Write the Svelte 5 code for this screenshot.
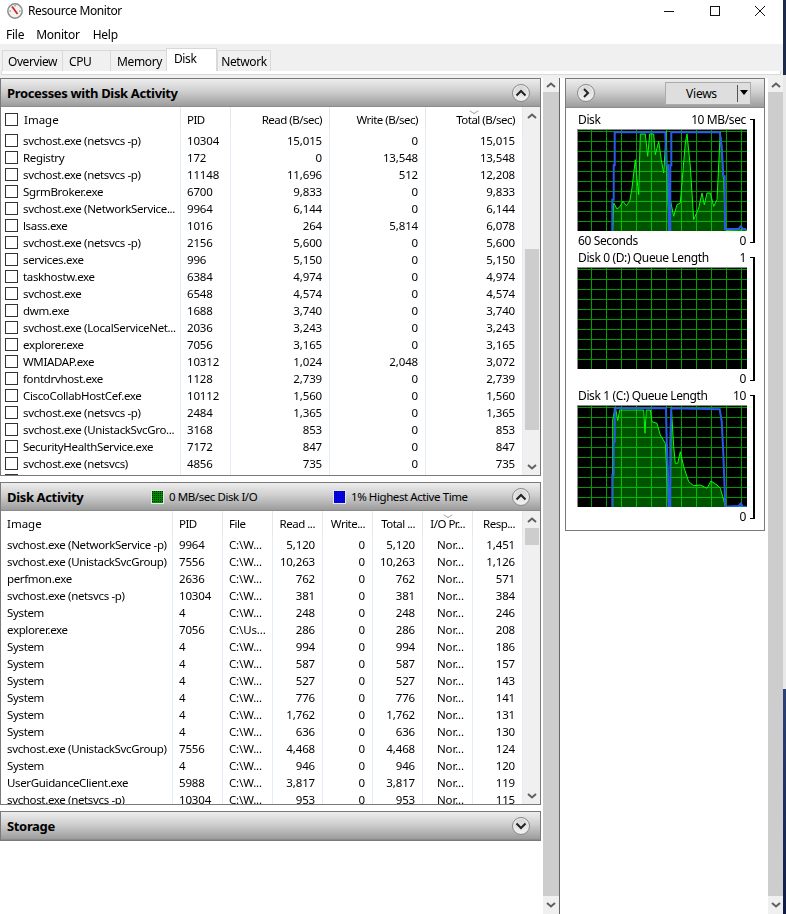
<script>
  const fmt = (n) => n.toLocaleString('en-US');
  const procs = [
    ['svchost.exe (netsvcs -p)', 10304, 15015, 0, 15015],
    ['Registry', 172, 0, 13548, 13548],
    ['svchost.exe (netsvcs -p)', 11148, 11696, 512, 12208],
    ['SgrmBroker.exe', 6700, 9833, 0, 9833],
    ['svchost.exe (NetworkService...', 9964, 6144, 0, 6144],
    ['lsass.exe', 1016, 264, 5814, 6078],
    ['svchost.exe (netsvcs -p)', 2156, 5600, 0, 5600],
    ['services.exe', 996, 5150, 0, 5150],
    ['taskhostw.exe', 6384, 4974, 0, 4974],
    ['svchost.exe', 6548, 4574, 0, 4574],
    ['dwm.exe', 1688, 3740, 0, 3740],
    ['svchost.exe (LocalServiceNet...', 2036, 3243, 0, 3243],
    ['explorer.exe', 7056, 3165, 0, 3165],
    ['WMIADAP.exe', 10312, 1024, 2048, 3072],
    ['fontdrvhost.exe', 1128, 2739, 0, 2739],
    ['CiscoCollabHostCef.exe', 10112, 1560, 0, 1560],
    ['svchost.exe (netsvcs -p)', 2484, 1365, 0, 1365],
    ['svchost.exe (UnistackSvcGro...', 3168, 853, 0, 853],
    ['SecurityHealthService.exe', 7172, 847, 0, 847],
    ['svchost.exe (netsvcs)', 4856, 735, 0, 735]
  ];
  const disk = [
    ['svchost.exe (NetworkService -p)', 9964, 'C:\\W...', 5120, 0, 5120, 1451],
    ['svchost.exe (UnistackSvcGroup)', 7556, 'C:\\W...', 10263, 0, 10263, 1126],
    ['perfmon.exe', 2636, 'C:\\W...', 762, 0, 762, 571],
    ['svchost.exe (netsvcs -p)', 10304, 'C:\\W...', 381, 0, 381, 384],
    ['System', 4, 'C:\\W...', 248, 0, 248, 246],
    ['explorer.exe', 7056, 'C:\\Us...', 286, 0, 286, 208],
    ['System', 4, 'C:\\W...', 994, 0, 994, 186],
    ['System', 4, 'C:\\W...', 587, 0, 587, 157],
    ['System', 4, 'C:\\W...', 527, 0, 527, 143],
    ['System', 4, 'C:\\W...', 776, 0, 776, 141],
    ['System', 4, 'C:\\W...', 1762, 0, 1762, 131],
    ['System', 4, 'C:\\W...', 636, 0, 636, 130],
    ['svchost.exe (UnistackSvcGroup)', 7556, 'C:\\W...', 4468, 0, 4468, 124],
    ['System', 4, 'C:\\W...', 946, 0, 946, 120],
    ['UserGuidanceClient.exe', 5988, 'C:\\W...', 3817, 0, 3817, 119],
    ['svchost.exe (netsvcs -p)', 10304, 'C:\\W...', 953, 0, 953, 115]
  ];
  const conv = (s, oy) => s.trim().split(/\s+/).map((p) => {
    const [x, y] = p.split(',').map(Number);
    return `${((x - 50) / 3).toFixed(1)},${((y - oy) / 3).toFixed(1)}`;
  }).join(' ');
  const graphs = [
    {
      label: 'Disk', max: '10 MB/sec', foot: '60 Seconds',
      area: conv('157,694 160,610 170,628 178,622 188,605 198,618 208,605 215,565 225,480 232,560 235,585 240,403 245,403 255,403 262,470 268,403 280,403 285,465 295,425 303,480 310,520 318,395 322,600 328,694 330,600 340,650 350,615 360,610 375,430 380,403 390,500 400,660 415,625 425,580 432,615 440,580 450,580 460,620 470,600 480,396 490,540 495,690 500,692 558,690 558,694', 388),
      blue: conv('156,694 156,600 160,600 160,497 163,497 163,398 315,398 318,497 323,497 326,694 330,694 330,497 333,497 333,398 478,398 484,440 489,530 493,530 494,688 535,688 541,680 548,688 558,688', 388)
    },
    { label: 'Disk 0 (D:) Queue Length', max: '1', foot: '', area: '', blue: '' },
    {
      label: 'Disk 1 (C:) Queue Length', max: '10', foot: '',
      area: conv('157,772 157,510 165,470 172,512 178,480 250,480 254,550 258,480 270,480 275,515 290,520 300,555 315,580 320,680 325,772 330,772 333,470 340,590 345,640 352,640 360,605 370,650 385,695 400,707 420,705 440,715 452,693 470,705 480,715 490,750 495,770 558,770 558,772', 465),
      blue: conv('156,772 156,675 160,675 160,575 163,575 163,475 317,475 319,575 323,675 325,772 330,772 330,575 333,475 478,478 484,515 489,610 492,690 495,770 535,768 542,760 547,770 558,770', 465)
    }
  ];
</script>

{#snippet chev(dir)}
  <svg class="chev" width="12" height="10" viewBox="0 0 12 10">
    <path d={dir === 'up' ? 'M2 7 L6 3.5 L10 7' : 'M2 3 L6 6.5 L10 3'} />
  </svg>
{/snippet}

{#snippet round(dir)}
  <span class="round">
    <svg width="12" height="10" viewBox="0 0 12 10">
      <path d={dir === 'up' ? 'M1.5 7.5 L6 3 L10.5 7.5' : dir === 'down' ? 'M1.5 2.5 L6 7 L10.5 2.5' : 'M4 1 L8 5 L4 9'} />
    </svg>
  </span>
{/snippet}

{#snippet vbar()}
  <div class="sb">
    <div class="sb-btn top">{@render chev('up')}</div>
    <div class="sb-track"></div>
    <div class="sb-btn bottom">{@render chev('down')}</div>
  </div>
{/snippet}

<div class="win">
  <div class="main">
    <header class="title">
      <svg class="logo" width="16" height="16" viewBox="0 0 16 16">
        <circle cx="8" cy="8" r="7.2" fill="#f4f2f0" stroke="#8a8a8a" stroke-width="1.4" />
        <path d="M5 3.5 L10.5 11" stroke="#c8262a" stroke-width="1.8" />
        <path d="M8 2 L8 3.5 M2.5 8 L4 8 M12 8 L13.5 8" stroke="#555" stroke-width="0.8" />
      </svg>
      <span class="title-text">Resource Monitor</span>
      <div class="controls">
        <span class="ctl"><svg width="12" height="12" viewBox="0 0 12 12"><path d="M1 6.5 H11" /></svg></span>
        <span class="ctl"><svg width="12" height="12" viewBox="0 0 12 12"><rect x="1.5" y="1.5" width="9" height="9" /></svg></span>
        <span class="ctl"><svg width="12" height="12" viewBox="0 0 12 12"><path d="M1 1 L11 11 M11 1 L1 11" /></svg></span>
      </div>
    </header>
    <nav class="menu"><span>File</span><span>Monitor</span><span>Help</span></nav>
    <div class="tabzone">
      <div class="tabs">
        <span class="tab t1">Overview</span>
        <span class="tab t2">CPU</span>
        <span class="tab t3">Memory</span>
        <span class="tab t4 active">Disk</span>
        <span class="tab t5">Network</span>
      </div>
      <div class="tabline"></div>
    </div>

    <div class="content">
      <div class="left">
        <section class="panel procs">
          <div class="phead"><h2>Processes with Disk Activity</h2>{@render round('up')}</div>
          <div class="pbody">
            <div class="table">
              <div class="row hrow pcols">
                <div class="c img"><i class="cb"></i><span class="hi">Image</span></div>
                <div class="c pid">PID</div>
                <div class="c num">Read (B/sec)</div>
                <div class="c num">Write (B/sec)</div>
                <div class="c num sorted">Total (B/sec)</div>
              </div>
              {#each procs as p}
                <div class="row pcols">
                  <div class="c img"><i class="cb"></i><span>{p[0]}</span></div>
                  <div class="c pid">{p[1]}</div>
                  <div class="c num">{fmt(p[2])}</div>
                  <div class="c num">{fmt(p[3])}</div>
                  <div class="c num">{fmt(p[4])}</div>
                </div>
              {/each}
              <div class="row pcols">
                <div class="c img"><i class="cb"></i></div>
                <div class="c"></div><div class="c"></div><div class="c"></div><div class="c"></div>
              </div>
            </div>
            <div class="inner-sb">
              <div class="isb-btn">{@render chev('up')}</div>
              <div class="isb-track"><div class="isb-thumb t-procs"></div></div>
              <div class="isb-btn">{@render chev('down')}</div>
            </div>
          </div>
        </section>

        <section class="panel dact">
          <div class="phead">
            <h2>Disk Activity</h2>
            <div class="legend l1"><i class="sw green"></i>0 MB/sec Disk I/O</div>
            <div class="legend l2"><i class="sw blue"></i>1% Highest Active Time</div>
            {@render round('up')}
          </div>
          <div class="pbody">
            <div class="table">
              <div class="row hrow dcols">
                <div class="c dimg">Image</div>
                <div class="c pid">PID</div>
                <div class="c pid">File</div>
                <div class="c num">Read ...</div>
                <div class="c num">Write...</div>
                <div class="c num">Total ...</div>
                <div class="c num sorted">I/O Pr...</div>
                <div class="c num">Resp...</div>
              </div>
              {#each disk as d}
                <div class="row dcols">
                  <div class="c dimg">{d[0]}</div>
                  <div class="c pid">{d[1]}</div>
                  <div class="c pid">{d[2]}</div>
                  <div class="c num">{fmt(d[3])}</div>
                  <div class="c num">{fmt(d[4])}</div>
                  <div class="c num">{fmt(d[5])}</div>
                  <div class="c nor">Nor...</div>
                  <div class="c num">{fmt(d[6])}</div>
                </div>
              {/each}
            </div>
            <div class="inner-sb">
              <div class="isb-btn">{@render chev('up')}</div>
              <div class="isb-track"><div class="isb-thumb t-disk"></div></div>
              <div class="isb-btn">{@render chev('down')}</div>
            </div>
          </div>
        </section>

        <section class="panel storage">
          <div class="phead"><h2>Storage</h2>{@render round('down')}</div>
        </section>
      </div>

      {@render vbar()}

      <div class="rightcol">
        <section class="panel graphs">
          <div class="phead ghead">
            {@render round('right')}
            <div class="views">
              <span class="views-l">Views</span>
              <span class="views-r"><svg width="10" height="6" viewBox="0 0 10 6"><path d="M1 0 H9 L5 5 Z" /></svg></span>
            </div>
          </div>
          <div class="gbody">
            {#each graphs as g}
              <div class="gblock">
                <div class="gcol">
                  <div class="gtop"><span>{g.label}</span><span>{g.max}</span></div>
                  <div class="chartbox">
                    <svg class="chart" width="170" height="102" viewBox="0 0 170 102">
                      {#if g.area}
                        <polygon points={g.area} class="area" />
                        <polyline points={g.area} class="aline" />
                        <polyline points={g.blue} class="bline" />
                      {/if}
                    </svg>
                  </div>
                  <div class="gfoot"><span>{g.foot}</span><span>0</span></div>
                </div>
                <div class="bracket"></div>
              </div>
            {/each}
          </div>
        </section>
      </div>

      {@render vbar()}
    </div>
  </div>
  <div class="edge">
    <div class="e1"></div>
    <div class="e2"></div>
    <div class="e3"></div>
  </div>
</div>

<style>
  :global(body) { margin: 0; background: #fff; }
  .win {
    width: 786px; height: 914px; overflow: hidden; display: flex;
    font-family: "Noto Sans", "Open Sans", sans-serif; font-size: 11.5px; color: #000;
    background: #fff; letter-spacing: -0.15px;
  }
  .main { width: 783px; display: flex; flex-direction: column; flex: none; }
  .edge { width: 3px; display: flex; flex-direction: column; flex: none; }
  .e1 { height: 75px; background: #1c2a4c; }
  .e2 { height: 614px; background: #e9e9e9; }
  .e3 { flex: 1; background: linear-gradient(#2c4378, #101c44); }

  .title { height: 22px; display: flex; align-items: center; padding-left: 7px; flex: none; }
  .logo { margin-right: 5px; }
  .title-text { font-size: 12px; letter-spacing: -0.4px; padding-bottom: 1px; }
  .controls { margin-left: auto; display: flex; }
  .ctl { width: 45.5px; display: flex; justify-content: center; }
  .ctl svg { fill: none; stroke: #111; stroke-width: 1; }

  .menu { height: 22px; display: flex; align-items: center; padding: 3px 0 0 6px; box-sizing: border-box; gap: 12px; font-size: 12px; flex: none; letter-spacing: -0.25px; }
  .menu span:nth-child(3) { margin-left: 1px; }

  .tabzone { height: 34px; background: #f0f0f0; flex: none; display: flex; flex-direction: column; padding-top: 4px; box-sizing: border-box; }
  .tabs { display: flex; align-items: flex-end; height: 23px; padding-left: 2px; flex: none; letter-spacing: -0.4px; }
  .tab {
    height: 21px; box-sizing: border-box; border: 1px solid #d9d9d9; border-bottom: none; border-right: none;
    background: #f0f0f0; display: flex; align-items: center; justify-content: center; font-size: 12px;
  }
  .t1 { width: 60px; }
  .t2 { width: 48px; justify-content: flex-start; padding-left: 6px; }
  .t3 { width: 56px; padding-left: 2px; }
  .t4 { width: 51px; }
  .t5 { width: 54px; border-right: 1px solid #d9d9d9; }
  .tab.active { height: 23px; background: #fff; border: 1px solid #d9d9d9; border-bottom: none; justify-content: flex-start; padding: 0 0 3px 7px; }
  .tabline { margin: 0 2px 0 1px; height: 4px; background: #fff; border: 1px solid #d9d9d9; border-top: none; box-sizing: border-box; }

  .content { flex: 1; display: flex; min-height: 0; }
  .left { width: 541px; flex: none; display: flex; flex-direction: column; gap: 6px; }
  .panel { border: 1px solid #7a7a7a; box-sizing: border-box; background: #fff; }
  .procs { height: 398px; display: flex; flex-direction: column; flex: none; }
  .dact { height: 323px; display: flex; flex-direction: column; flex: none; }
  .storage { height: 30px; flex: none; }

  .phead {
    height: 28px; flex: none; display: flex; align-items: center; padding: 0 10px 0 6px; box-sizing: border-box;
    background: linear-gradient(#ededed, #cfcfcf 45%, #9c9c9c);
    border-bottom: 1px solid #8c8c8c; position: relative;
  }
  .phead h2 { margin: 0; font-size: 13px; font-weight: 700; letter-spacing: -0.35px; }
  .round {
    margin-left: auto; width: 18px; height: 18px; border-radius: 50%; border: 1px solid #8a8a8a; box-sizing: border-box;
    background: linear-gradient(#d4d4d4, #f2f2f2); display: flex; align-items: center; justify-content: center;
    box-shadow: inset 0 0 0 1px #eee;
  }
  .round svg { fill: none; stroke: #222; stroke-width: 2; }

  .legend { display: flex; align-items: center; gap: 5px; font-size: 11.5px; position: absolute; top: 6px; letter-spacing: -0.42px; }
  .l1 { left: 150px; }
  .l2 { left: 332px; }
  .sw { width: 11px; height: 12px; display: block; border: 1px solid #e8e8e8; box-sizing: content-box; background-size: 2px 2px; }
  .sw.green { background-color: #008c00; background-image: radial-gradient(circle at 0.5px 0.5px, #002800 0.8px, transparent 0.9px); }
  .sw.blue { background-color: #0000ff; background-image: radial-gradient(circle at 0.5px 0.5px, #000070 0.8px, transparent 0.9px); }

  .pbody { flex: 1; display: flex; min-height: 0; }
  .table { width: 522px; flex: none; overflow: hidden; }
  .row { display: grid; height: 17px; align-items: stretch; line-height: 17px; }
  .pcols { grid-template-columns: 180px 50px 99px 96px 97px; }
  .dcols { grid-template-columns: 172px repeat(7, 50px); }
  .hrow { height: 25px; line-height: 25px; letter-spacing: -0.5px; }
  .c {
    border-right: 1px solid #e4ecf7; box-sizing: border-box; white-space: nowrap; overflow: hidden;
    padding: 0 6px;
  }
  .hrow .c { border-right-color: #e8e8e8; position: relative; overflow: visible; }
  .img { display: flex; align-items: center; padding-left: 4px; gap: 5px; letter-spacing: -0.35px; }
  .hrow .img { letter-spacing: 0; }
  .hi { margin-left: 1px; }
  .dimg { padding-left: 6px; letter-spacing: -0.35px; }
  .hrow .dimg { letter-spacing: 0; }
  .cb { width: 13px; height: 13px; border: 1px solid #333; box-sizing: border-box; flex: none; display: block; background: #fff; }
  .num { text-align: right; padding-right: 7px; }
  .nor { padding-left: 14px; }
  .sorted::before {
    content: ""; position: absolute; top: 1px; left: 50%; width: 5px; height: 5px;
    border-right: 1px solid #a0a0a0; border-bottom: 1px solid #a0a0a0; transform: translateX(-50%) scale(1.1, 0.7) rotate(45deg);
  }

  .inner-sb { flex: 1; display: flex; flex-direction: column; background: #f0f0f0; }
  .isb-btn { height: 17px; display: flex; align-items: center; justify-content: center; flex: none; }
  .isb-track { flex: 1; padding: 0 1px; }
  .isb-thumb { background: #cdcdcd; margin-left: 1px; }
  .t-procs { margin-top: 125px; height: 181px; }
  .t-disk { height: 17px; }
  .chev { display: block; }
  .chev path { fill: none; stroke: #606060; stroke-width: 2; }

  .sb { width: 17px; flex: none; margin-left: 2px; border-right: 1px solid #666; display: flex; flex-direction: column; box-sizing: border-box; }
  .sb-btn { flex: none; display: flex; align-items: center; justify-content: center; background: #f0f0f0; }
  .sb-btn.top { height: 14px; }
  .sb-btn.bottom { height: 18px; }
  .sb-track { flex: 1; background: #cdcdcd; }

  .rightcol { width: 206px; flex: none; padding-left: 5px; box-sizing: border-box; }
  .graphs { width: 200px; height: 453px; display: flex; flex-direction: column; }
  .ghead { padding: 0 13px 0 11px; justify-content: space-between; height: 29px; }
  .ghead .round { margin-left: 0; }
  .views { width: 86px; height: 23px; background: #dedede; border: 1px solid #ababab; box-sizing: border-box; display: flex; align-items: center; }
  .views-l { width: 71px; text-align: center; font-size: 12px; border-right: 1px solid #555; line-height: 17px; letter-spacing: -0.25px; }
  .views-r { flex: 1; display: flex; justify-content: center; }
  .views-r svg { fill: #000; }

  .gbody { padding: 2px 0 0 11px; }
  .gblock { height: 138px; display: flex; }
  .gcol { width: 170px; flex: none; display: flex; flex-direction: column; }
  .gtop, .gfoot { display: flex; justify-content: space-between; align-items: center; padding: 0 1px; box-sizing: border-box; font-size: 12px; letter-spacing: -0.38px; }
  .gtop { height: 19px; }
  .gfoot { height: 17px; padding-top: 2px; }
  .chartbox {
    width: 170px; height: 102px; box-sizing: border-box; flex: none;
    border-top: 1px solid #8a8a8a; border-left: 1px solid #8a8a8a;
    background-color: #000;
    background-image:
      linear-gradient(to right, #00a000 1px, transparent 1px),
      linear-gradient(to bottom, #009800 1px, transparent 1px);
    background-size: 15px 100%, 100% 10px;
    background-position: 13px 0, 0 1px;
  }
  .chart { display: block; margin: -1px 0 0 -1px; }
  .area { fill: #005400; mix-blend-mode: screen; }
  .aline { fill: none; stroke: #00ff00; stroke-width: 1; }
  .bline { fill: none; stroke: #2a5be6; stroke-width: 2; }
  .bracket {
    width: 5px; margin: 9px 0 5px 3px; border: 1px solid #000; border-left: none; border-right-width: 2px; box-sizing: border-box;
  }
</style>
